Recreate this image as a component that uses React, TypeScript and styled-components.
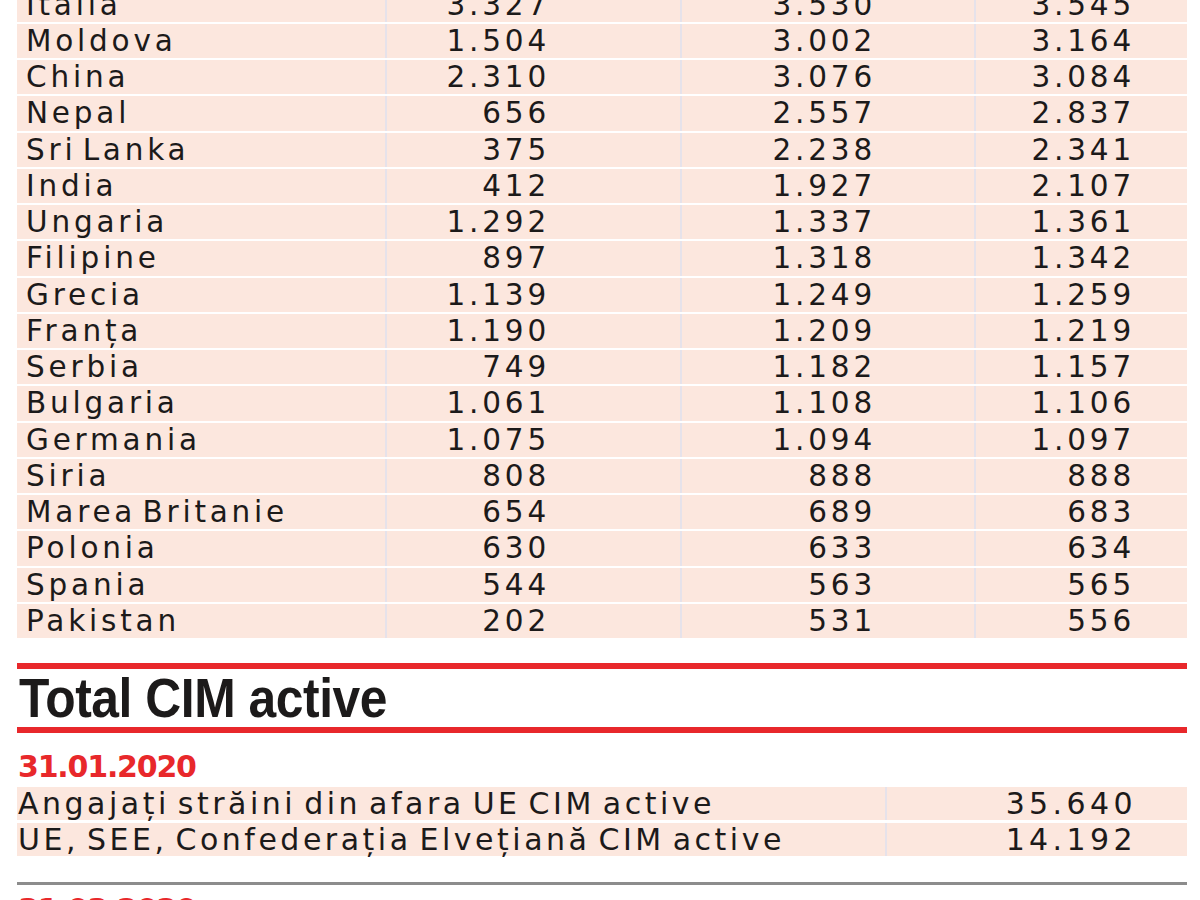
import styled, { createGlobalStyle } from "styled-components";

const rows: [string, string, string, string][] = [
  ["Italia", "3.327", "3.530", "3.545"],
  ["Moldova", "1.504", "3.002", "3.164"],
  ["China", "2.310", "3.076", "3.084"],
  ["Nepal", "656", "2.557", "2.837"],
  ["Sri Lanka", "375", "2.238", "2.341"],
  ["India", "412", "1.927", "2.107"],
  ["Ungaria", "1.292", "1.337", "1.361"],
  ["Filipine", "897", "1.318", "1.342"],
  ["Grecia", "1.139", "1.249", "1.259"],
  ["Franța", "1.190", "1.209", "1.219"],
  ["Serbia", "749", "1.182", "1.157"],
  ["Bulgaria", "1.061", "1.108", "1.106"],
  ["Germania", "1.075", "1.094", "1.097"],
  ["Siria", "808", "888", "888"],
  ["Marea Britanie", "654", "689", "683"],
  ["Polonia", "630", "633", "634"],
  ["Spania", "544", "563", "565"],
  ["Pakistan", "202", "531", "556"],
];

const totals: [string, string][] = [
  ["Angajați străini din afara UE CIM active", "35.640"],
  ["UE, SEE, Confederația Elvețiană CIM active", "14.192"],
];

const numPad = [130, 98, 52];

const GlobalStyle = createGlobalStyle`
  body {
    margin: 0;
    background: #fff;
    overflow: hidden;
  }
`;

const Page = styled.div`
  width: 1170px;
  padding-left: 17px;
  height: 900px;
  overflow: hidden;
  color: #1c1a1a;
`;

const CountryTable = styled.div`
  margin-top: -12.5px;
  display: flex;
  flex-direction: column;
  gap: 2px;
`;

const CountryRow = styled.div`
  display: grid;
  grid-template-columns: 368px 295px 294px 213px;
  height: 34.25px;
`;

const Cell = styled.div<{ $right?: number; $divider?: boolean }>`
  background: #fce7de;
  font-family: "DejaVu Sans", sans-serif;
  font-size: 29.5px;
  line-height: 34.25px;
  letter-spacing: 3.8px;
  word-spacing: -7px;
  white-space: nowrap;
  padding-left: ${(p) => (p.$right === undefined ? "9px" : "0")};
  padding-right: ${(p) => (p.$right === undefined ? "0" : `${p.$right}px`)};
  text-align: ${(p) => (p.$right === undefined ? "left" : "right")};
  border-left: ${(p) => (p.$divider ? "2px solid #e6e2ea" : "none")};
`;

const RedRule = styled.div<{ $top: number }>`
  margin-top: ${(p) => p.$top}px;
  height: 6px;
  background: #e8282b;
`;

const Title = styled.h2`
  margin: 1.5px 0 0 2px;
  font-family: "Liberation Sans", Arial, sans-serif;
  font-weight: 700;
  font-size: 55px;
  line-height: 55px;
  letter-spacing: -0.5px;
  color: #1c1a1a;
  /* condensed display face: no narrow family installed, so squeeze it */
  transform: scaleX(0.905);
  transform-origin: left center;
`;

const DateLabel = styled.div<{ $top: number }>`
  margin-top: ${(p) => p.$top}px;
  padding-left: 1px;
  font-family: "DejaVu Sans", sans-serif;
  font-weight: 700;
  font-size: 30px;
  line-height: 30px;
  letter-spacing: -1.2px;
  color: #e8282b;
`;

const TotalsTable = styled.div`
  margin-top: 5.4px;
  display: flex;
  flex-direction: column;
  gap: 3px;
`;

const TotalsRow = styled.div`
  display: grid;
  grid-template-columns: 868px 302px;
  height: 33px;
`;

const TotalLabel = styled.div`
  background: #fce7de;
  font-family: "DejaVu Sans", sans-serif;
  font-size: 30px;
  line-height: 33px;
  letter-spacing: 3.5px;
  word-spacing: -5px;
  white-space: nowrap;
  padding-left: 1px;
`;

const TotalValue = styled.div`
  background: #fce7de;
  border-left: 2px solid #e6e2ea;
  font-family: "DejaVu Sans", sans-serif;
  font-size: 30px;
  line-height: 33px;
  letter-spacing: 4.4px;
  text-align: right;
  padding-right: 50px;
`;

const GreyRule = styled.div`
  margin-top: 26px;
  height: 3px;
  background: #8c8c8c;
`;

export default function App() {
  return (
    <>
      <GlobalStyle />
      <Page>
        <CountryTable>
          {rows.map(([name, ...nums]) => (
            <CountryRow key={name}>
              <Cell>{name}</Cell>
              {nums.map((n, i) => (
                <Cell key={i} $right={numPad[i]} $divider>
                  {n}
                </Cell>
              ))}
            </CountryRow>
          ))}
        </CountryTable>

        <RedRule $top={25} />
        <Title>Total CIM active</Title>
        <RedRule $top={1.5} />

        <DateLabel $top={18.6}>31.01.2020</DateLabel>
        <TotalsTable>
          {totals.map(([label, value]) => (
            <TotalsRow key={label}>
              <TotalLabel>{label}</TotalLabel>
              <TotalValue>{value}</TotalValue>
            </TotalsRow>
          ))}
        </TotalsTable>

        <GreyRule />
        <DateLabel $top={10}>31.03.2020</DateLabel>
      </Page>
    </>
  );
}
